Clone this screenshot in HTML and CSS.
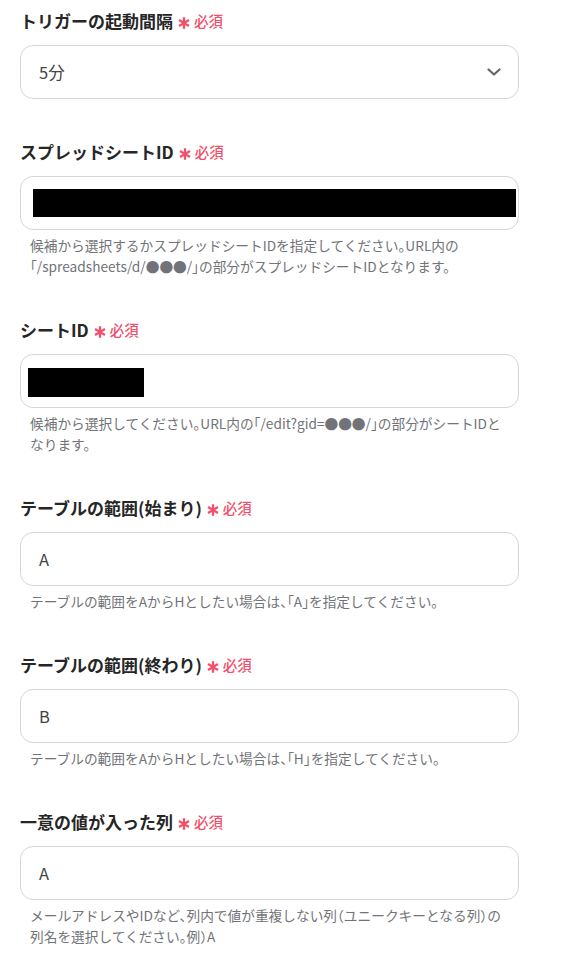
FILE: index.html
```html
<!DOCTYPE html>
<html lang="ja">
<head>
<meta charset="utf-8">
<title>設定</title>
<link rel="stylesheet" href="styles.css">
</head>
<body>
<main class="form">
  <section class="field">
    <div class="label">トリガーの起動間隔<span class="req"><svg class="ast" viewBox="0 0 12 12" width="12" height="12"><path d="M6 0.3V11.7M1 3.1L11 8.9M1 8.9L11 3.1"/></svg>必須</span></div>
    <div class="box select">
      <span class="value">5分</span>
      <svg class="chev" viewBox="0 0 14 8" width="14" height="8"><path d="M1.5 1.5L7 6.5L12.5 1.5"/></svg>
    </div>
  </section>

  <section class="field">
    <div class="label">スプレッドシートID<span class="req"><svg class="ast" viewBox="0 0 12 12" width="12" height="12"><path d="M6 0.3V11.7M1 3.1L11 8.9M1 8.9L11 3.1"/></svg>必須</span></div>
    <div class="box redact-wide"><span class="redact r1"></span></div>
    <p class="help">候補から選択するかスプレッドシートIDを指定してください。URL内の「/spreadsheets/d/●●●/」の部分がスプレッドシートIDとなります。</p>
  </section>

  <section class="field">
    <div class="label">シートID<span class="req"><svg class="ast" viewBox="0 0 12 12" width="12" height="12"><path d="M6 0.3V11.7M1 3.1L11 8.9M1 8.9L11 3.1"/></svg>必須</span></div>
    <div class="box redact-small"><span class="redact r2"></span></div>
    <p class="help">候補から選択してください。URL内の「/edit?gid=●●●/」の部分がシートIDとなります。</p>
  </section>

  <section class="field">
    <div class="label">テーブルの範囲(始まり)<span class="req"><svg class="ast" viewBox="0 0 12 12" width="12" height="12"><path d="M6 0.3V11.7M1 3.1L11 8.9M1 8.9L11 3.1"/></svg>必須</span></div>
    <div class="box"><span class="value">A</span></div>
    <p class="help">テーブルの範囲をAからHとしたい場合は、「A」を指定してください。</p>
  </section>

  <section class="field">
    <div class="label">テーブルの範囲(終わり)<span class="req"><svg class="ast" viewBox="0 0 12 12" width="12" height="12"><path d="M6 0.3V11.7M1 3.1L11 8.9M1 8.9L11 3.1"/></svg>必須</span></div>
    <div class="box"><span class="value">B</span></div>
    <p class="help">テーブルの範囲をAからHとしたい場合は、「H」を指定してください。</p>
  </section>

  <section class="field">
    <div class="label">一意の値が入った列<span class="req"><svg class="ast" viewBox="0 0 12 12" width="12" height="12"><path d="M6 0.3V11.7M1 3.1L11 8.9M1 8.9L11 3.1"/></svg>必須</span></div>
    <div class="box"><span class="value">A</span></div>
    <p class="help">メールアドレスやIDなど、列内で値が重複しない列（ユニークキーとなる列）の列名を選択してください。例）A</p>
  </section>
</main>
</body>
</html>
```

FILE: styles.css
```css
* { box-sizing: border-box; }

html, body {
  margin: 0;
  padding: 0;
  background: #ffffff;
}

body {
  font-family: "Noto Sans CJK JP", "Noto Sans", sans-serif;
  color: #2a2a2a;
}

.form {
  width: 499px;
  margin: 0 0 0 20px;
  padding-top: 9px;
  display: flex;
  flex-direction: column;
  gap: 41px;
}

.field {
  display: flex;
  flex-direction: column;
}

.label {
  font-size: 17px;
  font-weight: 700;
  line-height: 24px;
  height: 24px;
  margin-bottom: 12px;
  color: #262626;
  display: flex;
  align-items: center;
  white-space: nowrap;
}

.req {
  display: inline-flex;
  align-items: center;
  margin-left: 5px;
  font-size: 14.5px;
  font-weight: 500;
  color: #f2506a;
  gap: 4px;
}

.ast {
  width: 12px;
  height: 12px;
  margin-top: 4px;
  fill: none;
  stroke: #f2506a;
  stroke-width: 2.3;
}

.box {
  height: 54px;
  border: 1px solid #d3d6dc;
  border-radius: 13px;
  background: #fff;
  display: flex;
  align-items: center;
  padding: 0 18px;
}

.value {
  font-size: 16.5px;
  color: #444;
}

.select {
  justify-content: space-between;
  padding-right: 17px;
}

.chev {
  width: 14px;
  height: 8px;
  fill: none;
  stroke: #666;
  stroke-width: 2.2;
  stroke-linecap: round;
  stroke-linejoin: round;
}

.redact-wide { padding: 0 2px 0 12px; }
.redact-small { padding: 0 0 0 7px; }

.redact {
  display: block;
  background: #000;
}

.r1 { width: 484px; height: 28px; }
.r2 { width: 116px; height: 29px; margin-top: 3px; }

.help {
  margin: 5px 0 0 0;
  padding: 0 9px 0 10px;
  font-size: 13.7px;
  line-height: 21px;
  color: #717378;
  font-feature-settings: "halt";
}
```
